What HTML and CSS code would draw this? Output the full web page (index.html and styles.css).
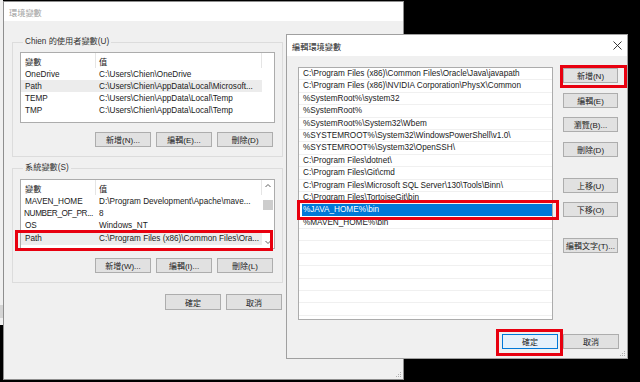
FILE: index.html
```html
<!DOCTYPE html>
<html lang="zh-Hant">
<head>
<meta charset="UTF-8">
<meta name="viewport" content="width=device-width, initial-scale=1.0">
<title>環境變數</title>
<link rel="stylesheet" href="styles.css">
</head>
<body>
<div class="desktop">
  <div class="edge-window"><div class="edge-block"></div></div>

  <!-- 環境變數 -->
  <div class="win env-win">
    <div class="titlebar">環境變數</div>
    <div class="win-body">
      <fieldset class="group">
        <legend>Chien 的使用者變數(U)</legend>
        <div class="listview user">
          <div class="lv-cols">
            <div class="lv-row lv-head"><span class="c1">變數</span><span class="c2">值</span></div>
            <div class="lv-row"><span class="c1">OneDrive</span><span class="c2">C:\Users\Chien\OneDrive</span></div>
            <div class="lv-row hover"><span class="c1">Path</span><span class="c2">C:\Users\Chien\AppData\Local\Microsoft...</span></div>
            <div class="lv-row"><span class="c1">TEMP</span><span class="c2">C:\Users\Chien\AppData\Local\Temp</span></div>
            <div class="lv-row"><span class="c1">TMP</span><span class="c2">C:\Users\Chien\AppData\Local\Temp</span></div>
          </div>
          <div class="lv-scroll"></div>
        </div>
        <div class="btn-row">
          <button class="btn">新增(N)...</button>
          <button class="btn">編輯(E)...</button>
          <button class="btn">刪除(D)</button>
        </div>
      </fieldset>

      <fieldset class="group sys-group">
        <legend>系統變數(S)</legend>
        <div class="listview sys">
          <div class="lv-cols">
            <div class="lv-row lv-head"><span class="c1">變數</span><span class="c2">值</span></div>
            <div class="lv-row"><span class="c1">MAVEN_HOME</span><span class="c2">D:\Program Development\Apache\mave...</span></div>
            <div class="lv-row"><span class="c1 tight">NUMBER_OF_PR...</span><span class="c2">8</span></div>
            <div class="lv-row"><span class="c1">OS</span><span class="c2">Windows_NT</span></div>
            <div class="lv-row hover"><span class="c1">Path</span><span class="c2">C:\Program Files (x86)\Common Files\Ora...</span></div>
          </div>
          <div class="lv-scroll">
            <svg class="arrow" width="12" height="12" viewBox="0 0 12 12"><path d="M3.5 7 L6 4.5 L8.5 7" fill="none" stroke="#606060" stroke-width="1"/></svg>
            <div class="thumb"></div>
            <div class="track"></div>
            <svg class="arrow" width="12" height="12" viewBox="0 0 12 12"><path d="M3.5 5 L6 7.5 L8.5 5" fill="none" stroke="#606060" stroke-width="1"/></svg>
          </div>
        </div>
        <div class="btn-row">
          <button class="btn">新增(W)...</button>
          <button class="btn">編輯(I)...</button>
          <button class="btn">刪除(L)</button>
        </div>
      </fieldset>

      <div class="dlg-btns">
        <button class="btn tall">確定</button>
        <button class="btn tall">取消</button>
      </div>
    </div>
    <svg class="grip" width="6" height="6" viewBox="0 0 6 6"><g fill="#b0b0b0"><rect x="4" y="0" width="1" height="1"/><rect x="2" y="2" width="1" height="1"/><rect x="4" y="2" width="1" height="1"/><rect x="0" y="4" width="1" height="1"/><rect x="2" y="4" width="1" height="1"/><rect x="4" y="4" width="1" height="1"/></g></svg>
  </div>

  <!-- 編輯環境變數 -->
  <div class="win edit-win">
    <div class="titlebar active">
      <span>編輯環境變數</span>
      <svg class="close" width="9" height="9" viewBox="0 0 9 9"><path d="M0.5 0.5 L8.5 8.5 M8.5 0.5 L0.5 8.5" stroke="#222" stroke-width="0.9"/></svg>
    </div>
    <div class="edit-body">
      <div class="edit-main">
        <div class="path-list">
          <div class="path-row">C:\Program Files (x86)\Common Files\Oracle\Java\javapath</div>
          <div class="path-row">C:\Program Files (x86)\NVIDIA Corporation\PhysX\Common</div>
          <div class="path-row">%SystemRoot%\system32</div>
          <div class="path-row">%SystemRoot%</div>
          <div class="path-row">%SystemRoot%\System32\Wbem</div>
          <div class="path-row">%SYSTEMROOT%\System32\WindowsPowerShell\v1.0\</div>
          <div class="path-row">%SYSTEMROOT%\System32\OpenSSH\</div>
          <div class="path-row">C:\Program Files\dotnet\</div>
          <div class="path-row">C:\Program Files\Git\cmd</div>
          <div class="path-row">C:\Program Files\Microsoft SQL Server\130\Tools\Binn\</div>
          <div class="path-row">C:\Program Files\TortoiseGit\bin</div>
          <div class="path-row sel">%JAVA_HOME%\bin</div>
          <div class="path-row">%MAVEN_HOME%\bin</div>
          <div class="path-row"></div>
          <div class="path-row"></div>
          <div class="path-row"></div>
          <div class="path-row"></div>
          <div class="path-row"></div>
          <div class="path-row"></div>
          <div class="path-row"></div>
        </div>
        <div class="side-btns">
          <button class="btn">新增(N)</button>
          <button class="btn">編輯(E)</button>
          <button class="btn">瀏覽(B)...</button>
          <button class="btn">刪除(D)</button>
          <button class="btn gap-before">上移(U)</button>
          <button class="btn">下移(O)</button>
          <button class="btn gap-before">編輯文字(T)...</button>
        </div>
      </div>
      <div class="dlg-btns edit-dlg">
        <button class="btn default">確定</button>
        <button class="btn">取消</button>
      </div>
    </div>
    <svg class="grip" width="6" height="6" viewBox="0 0 6 6"><g fill="#b0b0b0"><rect x="4" y="0" width="1" height="1"/><rect x="2" y="2" width="1" height="1"/><rect x="4" y="2" width="1" height="1"/><rect x="0" y="4" width="1" height="1"/><rect x="2" y="4" width="1" height="1"/><rect x="4" y="4" width="1" height="1"/></g></svg>
  </div>

  <!-- 紅框標示 -->
  <div class="mark mark-path"></div>
  <div class="mark mark-java"></div>
  <div class="mark mark-new"></div>
  <div class="mark mark-ok"></div>
</div>
</body>
</html>
```

FILE: styles.css
```css
body {
    margin: 0;
    background: #000;
    font-family: "Liberation Sans", "Noto Sans CJK TC", sans-serif;
    font-size: 8.2px;
    color: #1a1a1a;
}
.desktop {
    position: relative;
    width: 640px;
    height: 382px;
    overflow: hidden;
    background: #000;
}
.edge-window {
    position: absolute;
    left: 0;
    top: 0;
    width: 3px;
    height: 325px;
    background: #f0f0f0;
}
.edge-block {
    margin-top: 305px;
    height: 13px;
    background: #d4d4d4;
}
.win {
    position: absolute;
    box-sizing: border-box;
    background: #f0f0f0;
    border: 1px solid #8e8e8e;
    display: flex;
    flex-direction: column;
}
.env-win {
    left: 3px;
    top: 1px;
    width: 401px;
    height: 379px;
}
.edit-win {
    left: 286px;
    top: 34px;
    width: 342px;
    height: 325px;
    border-color: #a0a0a0;
}
.titlebar {
    flex: none;
    height: 19px;
    background: #fff;
    display: flex;
    align-items: center;
    justify-content: space-between;
    padding: 0 5px;
    color: #a0a0a0;
}
.titlebar.active {
    height: 21px;
    color: #1a1a1a;
}
.win-body {
    padding: 16px 0 0 8px;
}
.group {
    box-sizing: border-box;
    width: 271px;
    margin: 0;
    padding: 0 7px 9px 7px;
    border: 1px solid #dcdcdc;
}
.group legend {
    padding: 0 2px;
    margin-left: 3px;
    line-height: 10px;
    color: #333;
}
.sys-group {
    margin-top: 6px;
}
.listview {
    box-sizing: border-box;
    margin-top: 5px;
    height: 71px;
    border: 1px solid #acacac;
    background: #fff;
    display: flex;
}
.listview.sys {
    margin-top: 6px;
    height: 70px;
}
.lv-cols {
    width: 241px;
    flex: none;
}
.lv-row {
    display: flex;
    align-items: center;
    height: 12px;
    white-space: nowrap;
}
.sys .lv-row {
    height: 12.4px;
}
.lv-row.lv-head {
    height: 15px;
    align-items: stretch;
    border-right: 1px solid #e5e5e5;
}
.lv-head span {
    display: flex;
    align-items: center;
}
.lv-row.hover {
    background: #ececec;
}
.c1 {
    flex: none;
    box-sizing: border-box;
    width: 75px;
    padding-left: 4px;
    overflow: hidden;
    text-overflow: ellipsis;
}
.c1.tight {
    padding-left: 3px;
    letter-spacing: -0.35px;
}
.lv-head .c1 {
    border-right: 1px solid #e5e5e5;
}
.c2 {
    flex: 1;
    min-width: 0;
    padding-left: 3px;
    overflow: hidden;
    text-overflow: ellipsis;
}
.lv-scroll {
    flex: 1;
    display: flex;
    flex-direction: column;
    align-items: center;
}
.thumb {
    margin-top: 8px;
    width: 10px;
    height: 10px;
    background: #cdcdcd;
}
.track {
    flex: 1;
}
.arrow {
    display: block;
}
.btn {
    box-sizing: border-box;
    width: 56px;
    height: 15px;
    margin: 0;
    padding: 0;
    border: 1px solid #adadad;
    background: #e1e1e1;
    font-family: inherit;
    font-size: 8px;
    color: #1a1a1a;
    white-space: nowrap;
}
.btn.tall {
    height: 16px;
}
.btn.default {
    background: #e5f1fb;
    border-color: #0078d7;
}
.btn-row {
    display: flex;
    justify-content: flex-end;
    gap: 5px;
    margin: 9px 2px 0 0;
}
.dlg-btns {
    box-sizing: border-box;
    width: 271px;
    display: flex;
    justify-content: flex-end;
    gap: 5px;
    margin-top: 11px;
    padding-right: 1px;
}
.edit-body {
    padding: 11px 8px 0 11px;
}
.edit-main {
    display: flex;
    gap: 10px;
}
.path-list {
    box-sizing: border-box;
    width: 255px;
    height: 253px;
    border: 1px solid #acacac;
    background: #fff;
    overflow: hidden;
}
.path-row {
    box-sizing: border-box;
    height: 12.4px;
    line-height: 11.4px;
    padding-left: 4px;
    border-bottom: 1px solid #f0f0f0;
    white-space: nowrap;
    overflow: hidden;
}
.path-row.sel {
    margin-left: 3px;
    padding-left: 1px;
    background: #0078d7;
    color: #fff;
    border-bottom-color: #fff;
}
.side-btns {
    display: flex;
    flex-direction: column;
    padding-top: 1px;
}
.side-btns .btn {
    width: 55px;
    margin-bottom: 9.5px;
}
.side-btns .gap-before {
    margin-top: 11.5px;
}
.edit-dlg {
    width: auto;
    margin-top: 14px;
    padding-right: 0;
}
.grip {
    position: absolute;
    right: 1px;
    bottom: 1px;
}
.mark {
    position: absolute;
    box-sizing: border-box;
    border: 3px solid #e8000f;
}
.mark-path {
    left: 15px;
    top: 230px;
    width: 258px;
    height: 21px;
}
.mark-java {
    left: 297px;
    top: 200px;
    width: 262px;
    height: 20px;
}
.mark-new {
    left: 560px;
    top: 65px;
    width: 67px;
    height: 23px;
}
.mark-ok {
    left: 496px;
    top: 329px;
    width: 67px;
    height: 27px;
}
```
